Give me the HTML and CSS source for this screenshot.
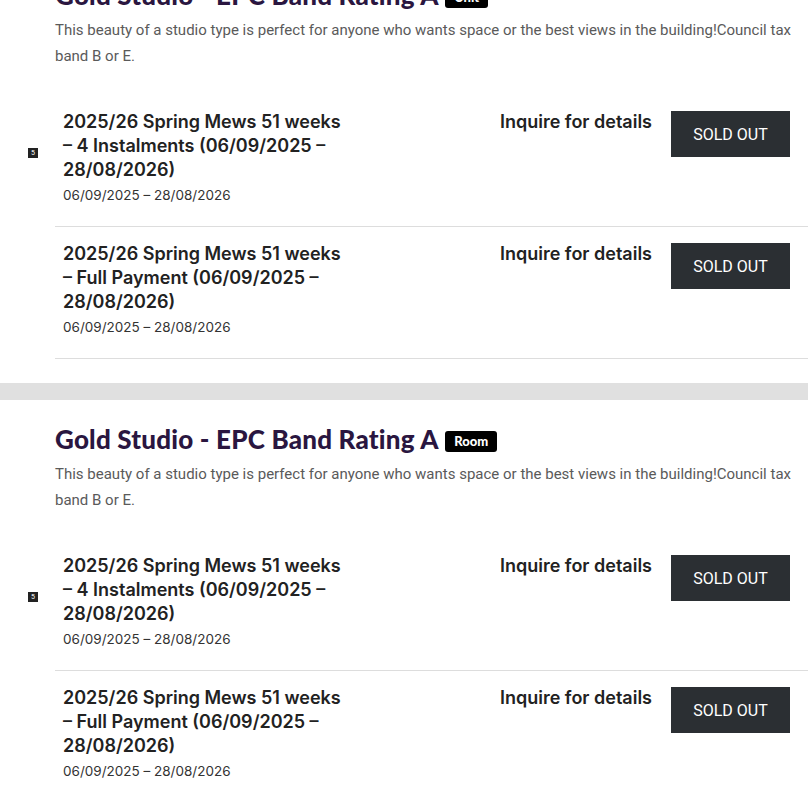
FILE: index.html
```html
<!DOCTYPE html>
<html lang="en">
<head>
    <meta charset="UTF-8">
    <meta name="viewport" content="width=device-width, initial-scale=1.0">
    <title>Gold Studio rooms</title>
    <link rel="stylesheet" href="styles.css">
</head>
<body>
    <div class="page">
        <div class="room-type">
            <h2 class="room-title">Gold Studio - EPC Band Rating A <span class="tag">Unit</span></h2>
            <p class="room-desc">This beauty of a studio type is perfect for anyone who wants space or the best views in the building!Council tax band B or E.</p>

            <div class="tenancies">
                <div class="tenancy">
                    <span class="marker">5</span>
                    <div class="tenancy-info">
                        <div class="tenancy-name">2025/26 Spring Mews 51 weeks – 4 Instalments (06/09/2025 – 28/08/2026)</div>
                        <div class="tenancy-dates">06/09/2025 – 28/08/2026</div>
                    </div>
                    <div class="tenancy-price">Inquire for details</div>
                    <button class="sold-out">SOLD OUT</button>
                </div>
                <div class="tenancy">
                    <div class="tenancy-info">
                        <div class="tenancy-name">2025/26 Spring Mews 51 weeks – Full Payment (06/09/2025 – 28/08/2026)</div>
                        <div class="tenancy-dates">06/09/2025 – 28/08/2026</div>
                    </div>
                    <div class="tenancy-price">Inquire for details</div>
                    <button class="sold-out">SOLD OUT</button>
                </div>
            </div>
        </div>

        <div class="divider"></div>

        <div class="room-type">
            <h2 class="room-title">Gold Studio - EPC Band Rating A <span class="tag">Room</span></h2>
            <p class="room-desc">This beauty of a studio type is perfect for anyone who wants space or the best views in the building!Council tax band B or E.</p>

            <div class="tenancies">
                <div class="tenancy">
                    <span class="marker">5</span>
                    <div class="tenancy-info">
                        <div class="tenancy-name">2025/26 Spring Mews 51 weeks – 4 Instalments (06/09/2025 – 28/08/2026)</div>
                        <div class="tenancy-dates">06/09/2025 – 28/08/2026</div>
                    </div>
                    <div class="tenancy-price">Inquire for details</div>
                    <button class="sold-out">SOLD OUT</button>
                </div>
                <div class="tenancy">
                    <div class="tenancy-info">
                        <div class="tenancy-name">2025/26 Spring Mews 51 weeks – Full Payment (06/09/2025 – 28/08/2026)</div>
                        <div class="tenancy-dates">06/09/2025 – 28/08/2026</div>
                    </div>
                    <div class="tenancy-price">Inquire for details</div>
                    <button class="sold-out">SOLD OUT</button>
                </div>
            </div>
        </div>
    </div>
</body>
</html>
```

FILE: styles.css
```css
body {
    margin: 0;
    background-color: #fff;
    font-family: Roboto, 'Liberation Sans', sans-serif;
    color: #222;
}

.page {
    margin-top: -44px;
}

.room-type {
    padding: 24px 0 0 55px;
}

.room-title {
    margin: 0;
    font-family: Lato, sans-serif;
    font-weight: 900;
    font-size: 26px;
    line-height: 30px;
    letter-spacing: 0.2px;
    color: #2a1640;
}

.tag {
    display: inline-block;
    vertical-align: 3px;
    margin-left: 1px;
    background-color: #000;
    color: #fff;
    font-size: 13px;
    font-weight: 900;
    line-height: 21px;
    letter-spacing: 0;
    padding: 0 9px;
    border-radius: 3px;
}

.room-desc {
    margin: 7px 0 0;
    font-size: 15px;
    line-height: 26px;
    color: #5a5a5a;
    padding-right: 10px;
}

.tenancies {
    margin-top: 26px;
}

.tenancy {
    position: relative;
    display: flex;
    align-items: flex-start;
    padding: 15px 18px 21px 8px;
    border-bottom: 1px solid #ddd;
}

.marker {
    position: absolute;
    left: -27px;
    top: 53px;
    width: 10px;
    height: 10px;
    background-color: #222;
    color: #fff;
    font-size: 7px;
    line-height: 10px;
    text-align: center;
}

.tenancy-info {
    width: 285px;
}

.tenancy-name {
    font-family: Inter, sans-serif;
    font-weight: 600;
    font-size: 18px;
    line-height: 24px;
    color: #222;
}

.tenancy-dates {
    margin-top: 3px;
    font-family: Inter, sans-serif;
    font-size: 13.5px;
    line-height: 20px;
    color: #333;
}

.tenancy-price {
    margin-left: auto;
    font-family: Inter, sans-serif;
    font-weight: 600;
    font-size: 18px;
    line-height: 24px;
    color: #222;
}

.sold-out {
    margin: 1px 0 0 19px;
    width: 119px;
    height: 46px;
    border: none;
    background-color: #2b2f33;
    color: #fff;
    font-family: Roboto, sans-serif;
    font-size: 16px;
}

.divider {
    margin-top: 24px;
    height: 17px;
    background-color: #e0e0e0;
}
```
